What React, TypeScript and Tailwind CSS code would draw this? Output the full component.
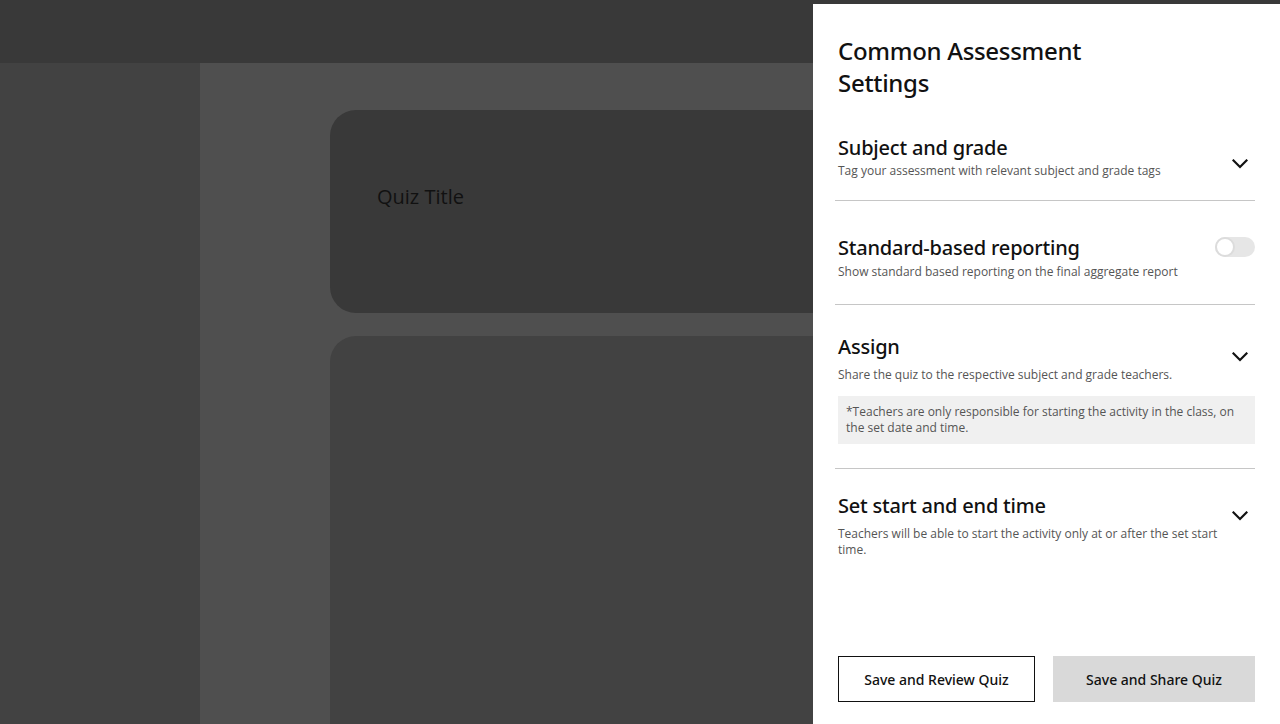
import React from "react";

function Chevron({ className = "" }: { className?: string }) {
  return (
    <svg width="16" height="10" viewBox="0 0 16 10" className={className} fill="none">
      <path d="M1.5 1.5 L8 8 L14.5 1.5" stroke="#111" strokeWidth="2.2" strokeLinecap="square" />
    </svg>
  );
}

function Toggle() {
  return (
    <div className="relative h-[20px] w-[40px] rounded-full bg-[#e6e6e6]">
      <div className="absolute left-0 top-0 h-[20px] w-[20px] rounded-full border-2 border-[#dcdcdc] bg-white" />
    </div>
  );
}

function Section({
  title,
  desc,
  descGap,
  right,
  rightTop,
  className = "",
  children,
}: {
  title: string;
  desc: string;
  descGap: string;
  right: React.ReactNode;
  rightTop: string;
  className?: string;
  children?: React.ReactNode;
}) {
  return (
    <div className={"border-b border-[#c6c6c6] px-[3px] " + className}>
      <div className="flex items-start justify-between">
        <div className="max-w-[380px]">
          <div className="font-['Noto_Sans',sans-serif] text-[20px] font-medium leading-[28px] tracking-[-0.2px] text-[#111]">
            {title}
          </div>
          <div className={"text-[12px] leading-[16px] text-[#555] " + descGap}>{desc}</div>
        </div>
        <div className={rightTop}>{right}</div>
      </div>
      {children}
    </div>
  );
}

export default function App() {
  return (
    <div className="relative h-[724px] w-full overflow-hidden bg-[#4f4f4f] font-['Open_Sans',sans-serif]">
      <div className="h-[63px] bg-[#393939]" />
      <div className="flex h-[661px]">
        <div className="w-[200px] bg-[#424242]" />
        <div className="flex-1 px-[130px] pt-[47px]">
          <div className="flex h-[203px] items-start rounded-[26px] bg-[#393939] px-[47px] pt-[73px]">
            <span className="text-[20px] leading-[28px] text-[#111]">Quiz Title</span>
          </div>
          <div className="mt-[23px] h-[420px] rounded-[26px] bg-[#424242]" />
        </div>
      </div>

      <div className="absolute bottom-0 right-0 top-[4px] flex w-[467px] flex-col bg-white pb-[22px] pl-[22px] pr-[25px] pt-[31px]">
        <h1 className="max-w-[260px] pl-[3px] font-['Noto_Sans',sans-serif] text-[24px] font-medium leading-[32px] tracking-[-0.3px] text-[#111]">
          Common Assessment Settings
        </h1>

        <Section
          title="Subject and grade"
          desc="Tag your assessment with relevant subject and grade tags"
          descGap="mt-[1px]"
          right={<Chevron />}
          rightTop="mr-[4px] mt-[25px]"
          className="mt-[35px] pb-[21px]"
        />
        <Section
          title="Standard-based reporting"
          desc="Show standard based reporting on the final aggregate report"
          descGap="mt-[2px]"
          right={<Toggle />}
          rightTop="-mr-[3px] mt-[3px]"
          className="pb-[24px] pt-[33px]"
        />
        <Section
          title="Assign"
          desc="Share the quiz to the respective subject and grade teachers."
          descGap="mt-[6px]"
          right={<Chevron />}
          rightTop="mr-[4px] mt-[19px]"
          className="pb-[24px] pt-[28px]"
        >
          <div className="mt-[13px] -mr-[3px] bg-[#f0f0f0] px-[8px] py-[8px] text-[12px] leading-[16px] text-[#555]">
            *Teachers are only responsible for starting the activity in the class, on the set date and time.
          </div>
        </Section>
        <div className="px-[3px] pt-[23px]">
          <div className="flex items-start justify-between">
            <div className="max-w-[380px]">
              <div className="font-['Noto_Sans',sans-serif] text-[20px] font-medium leading-[28px] tracking-[-0.2px] text-[#111]">
                Set start and end time
              </div>
              <div className="mt-[6px] text-[12px] leading-[16px] text-[#555]">
                Teachers will be able to start the activity only at or after the set start time.
              </div>
            </div>
            <div className="mr-[4px] mt-[19px]">
              <Chevron />
            </div>
          </div>
        </div>

        <div className="mt-auto flex gap-[18px] pl-[3px] font-['Noto_Sans',sans-serif]">
          <button className="h-[46px] w-[197px] border border-[#111] bg-white text-[14px] font-medium text-[#111]">
            Save and Review Quiz
          </button>
          <button className="h-[46px] flex-1 bg-[#d9d9d9] text-[14px] font-medium text-[#111]">
            Save and Share Quiz
          </button>
        </div>
      </div>
    </div>
  );
}
